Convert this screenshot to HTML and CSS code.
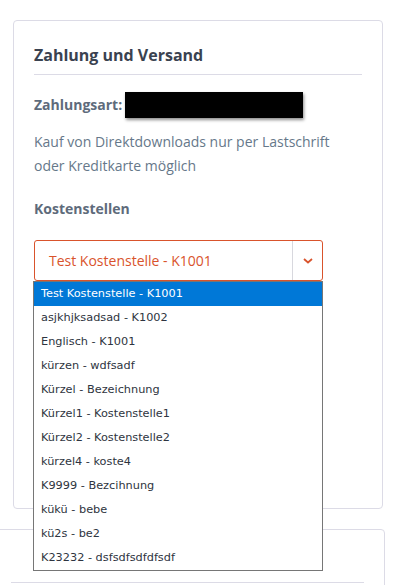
FILE: index.html
```html
<!DOCTYPE html>
<html lang="de">
<head>
<meta charset="utf-8">
<link rel="stylesheet" href="styles.css">
</head>
<body>
<div class="page">
  <section class="card">
    <h2 class="card-title">Zahlung und Versand</h2>
    <div class="pay-row">
      <span class="label">Zahlungsart:</span>
      <span class="redacted"></span>
    </div>
    <p class="note">Kauf von Direktdownloads nur per Lastschrift oder Kreditkarte möglich</p>
    <div class="label cost-label">Kostenstellen</div>
    <div class="select-wrap">
      <div class="select">
        <span class="select-value">Test Kostenstelle - K1001</span>
        <span class="select-arrow">
          <svg width="10" height="6" viewBox="0 0 10 6"><path d="M1 1 L5 4.5 L9 1" fill="none" stroke="#d9532c" stroke-width="1.8"/></svg>
        </span>
      </div>
      <ul class="options">
        <li class="opt active">Test Kostenstelle - K1001</li>
        <li class="opt">asjkhjksadsad - K1002</li>
        <li class="opt">Englisch - K1001</li>
        <li class="opt">kürzen - wdfsadf</li>
        <li class="opt">Kürzel - Bezeichnung</li>
        <li class="opt">Kürzel1 - Kostenstelle1</li>
        <li class="opt">Kürzel2 - Kostenstelle2</li>
        <li class="opt">kürzel4 - koste4</li>
        <li class="opt">K9999 - Bezcihnung</li>
        <li class="opt">kükü - bebe</li>
        <li class="opt">kü2s - be2</li>
        <li class="opt">K23232 - dsfsdfsdfdfsdf</li>
      </ul>
    </div>
  </section>
  <section class="card card-second">
    <div class="card-second-head"></div>
  </section>
</div>
</body>
</html>
```

FILE: styles.css
```css
* { box-sizing: border-box; }
html, body { margin: 0; padding: 0; background: #fff; overflow: hidden; }
body { font-family: "Open Sans", sans-serif; }
.page {
  padding-top: 20px;
  display: flex;
  flex-direction: column;
  gap: 20px;
}
.card {
  margin-left: 13px;
  width: 370px;
  height: 489px;
  border: 1px solid #dcdbe6;
  border-radius: 4px;
  padding: 0 20px;
}
.card-title {
  margin: 0;
  padding-top: 22px;
  height: 54px;
  font-size: 16px;
  font-weight: 700;
  color: #3a4250;
  line-height: 24px;
  border-bottom: 1px solid #dcdbe6;
}
.pay-row {
  display: flex;
  align-items: center;
  margin-top: 16px;
  height: 27px;
}
.label {
  font-size: 14px;
  font-weight: 700;
  color: #5e6b7b;
}
.redacted {
  display: block;
  margin-left: 3px;
  width: 178px;
  height: 26px;
  background: #000;
  box-shadow: 1px 2px 3px rgba(0,0,0,0.45);
}
.note {
  margin: 12px 0 0;
  font-size: 14px;
  line-height: 24px;
  color: #66788a;
}
.cost-label {
  margin-top: 21px;
  line-height: 20px;
}
.select-wrap {
  position: relative;
  margin-top: 21px;
  width: 289px;
}
.select {
  display: flex;
  height: 41px;
  border: 1px solid #d9532c;
  border-radius: 3px;
}
.select-value {
  flex: 1;
  padding-left: 14px;
  font-size: 14px;
  line-height: 40px;
  color: #d9532c;
}
.select-arrow {
  width: 30px;
  border-left: 1px solid #d8d8de;
  display: flex;
  align-items: center;
  justify-content: center;
}
.options {
  position: absolute;
  left: -1px;
  top: 41px;
  width: 290px;
  margin: 0;
  padding: 0;
  list-style: none;
  background: #fff;
  border: 1px solid #767676;
  font-family: "DejaVu Sans", sans-serif;
  font-size: 11.3px;
}
.opt {
  height: 24px;
  line-height: 24px;
  padding-left: 7px;
  color: #2e3440;
}
.opt.active {
  background: #0078d7;
  color: #fff;
}
.card-second {
  margin-left: -10px;
  width: 395px;
  height: 120px;
}
.card-second-head {
  height: 53px;
  border-bottom: 1px solid #dcdbe6;
}
```
